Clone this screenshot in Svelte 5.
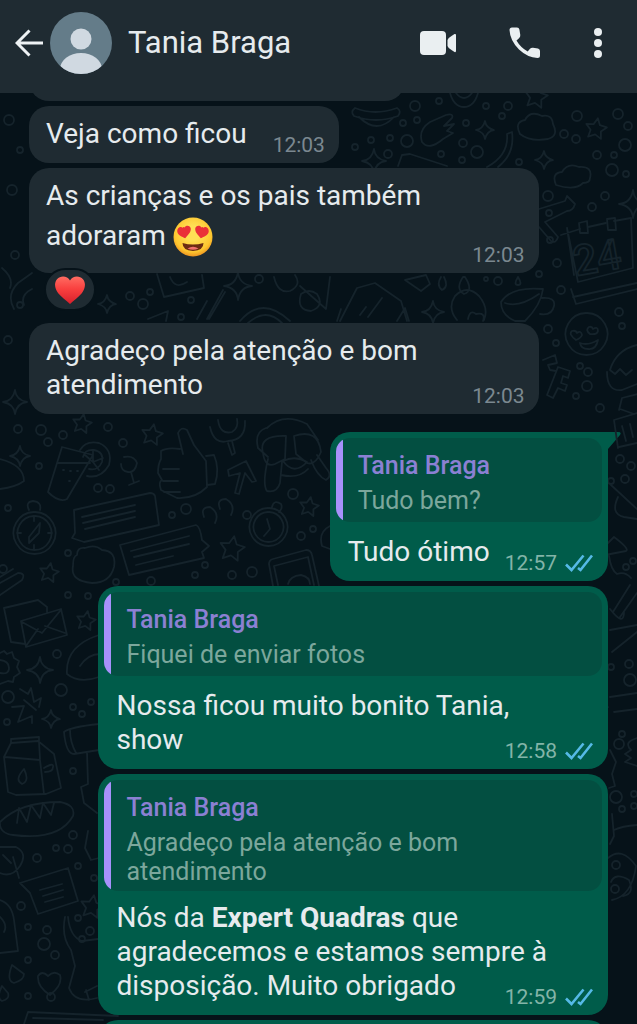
<script>
    const messages = [
        { time: '12:03', lines: [[{ text: 'Veja como ficou' }]] },
        { time: '12:03', wide: true, reaction: true, lines: [[{ text: 'As crianças e os pais também' }], [{ text: 'adoraram ' }, { emoji: true }]] },
        { time: '12:03', wide: true, lines: [[{ text: 'Agradeço pela atenção e bom' }], [{ text: 'atendimento' }]] },
        { time: '12:57', mine: true, tail: true, quote: ['Tudo bem?'], lines: [[{ text: 'Tudo ótimo' }]] },
        {
            time: '12:58',
            mine: true,
            wide: true,
            quote: ['Fiquei de enviar fotos'],
            lines: [[{ text: 'Nossa ficou muito bonito Tania,' }], [{ text: 'show' }]]
        },
        {
            time: '12:59',
            mine: true,
            wide: true,
            quote: ['Agradeço pela atenção e bom', 'atendimento'],
            lines: [
                [{ text: 'Nós da ' }, { text: 'Expert Quadras', bold: true }, { text: ' que' }],
                [{ text: 'agradecemos e estamos sempre à' }],
                [{ text: 'disposição. Muito obrigado' }]
            ]
        }
    ];

    // wallpaper: [x, y, radius]
    const dots = [
        [415, 106, 5], [439, 101, 3], [486, 106, 3], [508, 106, 4], [502, 116, 3], [577, 116, 5], [564, 134, 4], [576, 139, 4],
        [618, 114, 5], [628, 126, 4], [625, 145, 6], [597, 155, 4], [614, 155, 3], [612, 170, 6], [626, 174, 3], [371, 140, 3],
        [390, 138, 3], [407, 141, 6], [355, 147, 3], [388, 154, 4], [441, 154, 3], [463, 143, 4], [477, 152, 6], [462, 160, 3],
        [519, 162, 3], [403, 123, 3], [417, 120, 3], [466, 123, 3], [548, 196, 5], [605, 196, 4], [592, 207, 4], [549, 213, 3],
        [557, 263, 4], [539, 274, 3], [561, 290, 4], [498, 281, 4], [486, 279, 2], [548, 329, 4], [556, 343, 3], [619, 312, 4],
        [622, 326, 3], [580, 366, 3], [588, 372, 4], [587, 386, 5], [576, 396, 3], [600, 408, 4], [130, 296, 4], [150, 292, 3],
        [143, 304, 5], [191, 300, 3], [259, 279, 4], [181, 317, 3], [18, 429, 4], [41, 430, 5], [63, 435, 4], [48, 442, 4],
        [108, 427, 4], [123, 443, 4], [39, 466, 3], [98, 488, 4], [110, 489, 4], [8, 508, 3], [172, 515, 3], [186, 509, 5],
        [293, 494, 5], [313, 529, 3], [301, 536, 4], [247, 515, 4], [68, 553, 3], [205, 565, 3], [232, 575, 4], [252, 572, 5],
        [195, 575, 3], [151, 581, 4], [116, 582, 3], [68, 595, 3], [88, 596, 3], [3, 569, 4], [57, 654, 4], [61, 690, 6],
        [8, 697, 6], [73, 707, 3], [82, 714, 3], [91, 702, 3], [7, 722, 3], [73, 771, 3], [73, 835, 4], [56, 848, 3],
        [68, 849, 4], [37, 858, 4], [78, 866, 3], [94, 878, 3], [21, 906, 4], [28, 927, 3], [47, 930, 4], [44, 944, 6],
        [55, 955, 4], [28, 960, 3], [78, 918, 3], [90, 931, 4], [82, 939, 3], [28, 996, 3], [51, 997, 4], [620, 459, 4],
        [631, 466, 4], [625, 479, 4], [611, 481, 3], [633, 561, 3], [626, 567, 3], [629, 664, 4], [630, 680, 6], [611, 667, 3],
        [622, 734, 3], [619, 744, 5], [616, 797, 6], [634, 794, 3], [634, 806, 3], [622, 809, 3], [616, 865, 4], [615, 889, 4],
        [20, 305, 3], [8, 340, 4], [15, 255, 4], [12, 190, 5], [20, 150, 3], [9, 120, 5], [550, 240, 3]
    ];

    // [x, y, size]
    const stars = [
        [82, 424, 10], [152, 435, 11], [309, 507, 10], [232, 549, 13], [49, 573, 10], [86, 621, 10], [596, 129, 11], [536, 97, 12], [92, 907, 12]
    ];

    const sparkles = [
        [485, 130, 9], [544, 160, 9], [238, 286, 14], [107, 304, 9], [433, 312, 11], [633, 204, 14], [40, 670, 13],
        [51, 719, 9], [374, 161, 12], [20, 456, 10], [15, 402, 12]
    ];

    const doodles = [
        // planet, pizza, hand, banana, clouds
        'M355 108q20 8 42 0q5 3 1 8q-22 8-44 0q-4-4 1-8ZM359 117q18 18 35 0M450 93q4 14 14 14t14-14M456 93q8 10 16 0',
        'M422 142q-4-12 8-20l16-7q8-2 6 3l-8 8l10-2l-7 7l6 2l-10 6q-14 12-21 3ZM487 167q22-12 20-33l5-2q3 22-14 35',
        'M398 166l4-11l8-1l37 12M520 134q-6-12 5-14q5-10 17-4q10-2 11 8q6 12-5 15q-18 3-28-5ZM556 185q-5-12 6-13q6-10 17-5q14-1 11 11q0 5-7 5q-8 8-27 2Z',
        // paint brush and calendar
        'M539 209l26-8l2-5l8 8q-2 7-8 7l-22 11l13 15q-2 7-7 4l-12-14M561 235l19-6m8-2l18-4m8-2l17-3l2 50l-55 14l-11-54l7 47M571 289l5 15l61-15M573 297l64-14',
        'M579 223l8-2l1 12h-8ZM607 219l8-1l1 12h-8Z',
        // cup, card, drop, balloon, camera, glasses
        'M501 302q10-16 42-13q-2 16-18 32h-10q-14-6-14-19Zm4 1q14 5 34-9M542 298q14-1 12 8q-2 10-14 8M340 321l17-33l18-5l26 18l6 20M341 309l-4 12M360 315l6-8m2 10l14-19M397 321l8-13l4 13',
        'M405 280l21-5l4 9l-9 7ZM463 277q-8 12 1 17q10-3 1-17ZM441 277q-5 8 1 13q7-3 2-13M518 277q-5 8 0 8q5 0 0-8M157 274l7 23l40-9l-2-13M170 277q5 13 17 5M197 319l10-18m0 18l16-29m-14 29l16-27',
        'M274 277q4 17 16 14q12-6 5-16M300 286l26 23l4-32M301 294q-5 16 10 17q14-5 6-17q-8-6-16 0ZM240 321q22-26 50 0M248 323q18-16 34 0M148 319l20-8l-2 10M14 309q-8-14 4-26l14-10M24 305q-4-10 8-16M2 268q12 10 8 20',
        // medal, emoji, letters, donut
        'M457 320q-10-12-2-24q12-12 24 0q10 12 5 24M468 319q2-10 8-5q10-2 7 7M587 313a21 21 0 1 1-1 0M576 340q-8-6-4-9q4-1 5 2q4-3 5 2q-1 3-6 5ZM590 334q-5-4-1-7q3-1 4 2q5-3 5 2q-1 4-8 3ZM580 343q8 3 18-3q-2 10-10 9q-7 0-8-6Z',
        'M543 360l12-5l2 8l-9 2l2 5l6 1M558 367l12 4l-2 7l-5-2l-2 7l6 2l-2 6l-7-3l-5 10l-6-3ZM610 370q6-20 27-25M607 372q0 20 15 18l15-6M610 370l5 4l5-5l6 6l6-5M619 410l3-12l16-4M620 409l14 5',
        // lemonade
        'M62 447l31 8l-26 44q-8 4-19-7ZM57 463h33M80 450q6-10 19-7q14 6 10 22q-8 14-22 11M83 457q2-8 11-7q10 2 8 12q-4 9-13 7M93 462l-8-7m8 7v-12m0 12l10-4m-10 4l6 8M63 470h1m6 1h1m6 0h1m-9 10h1',
        // pin, thumb up, microphone
        'M124 457q10-2 13 6q-2 10-9 9q-7-1-7-8M131 472l3 11m-5 2l10-4M183 454l-5-21q3-7 9-3l7 15l12 16l1 26q-12 12-30 11l-16-8q-3-8 1-10l-4-7q0-9 3-14l0-8q6-4 19-2M163 469h16m-16 12h15m-14 11h16M206 456l8-1q6 14 1 29l-8 1M210 427q4 18 18 14q18-1 17-20M218 420q2 15 14 12q7-4 5-13M228 443l4 12l3-2l-3-12',
        // arrow, covered eyes
        'M228 470l18-9l10 20l-4 1l-7-9l-6 21l-4-1l5-20l-11 3ZM267 428q16-16 40-4l11 16M266 428q-12 4-8 20l10 9M286 436q-28-1-23 17q2 15 12 11l10-5ZM294 436q24-8 27 16q-6 14-14 11l-11-9ZM268 459q-6 25-1 32q10 2 13-8l2-21M311 460q6 16 15 20q7-4 0-12l-9-13M283 461q12-6 24 1q-13 14-24-1ZM281 475q18 4 27-6',
        // notes, compass, quotes, clock
        'M74 510l76-17q4 0 5 3l4 29l-75 17l-12-4l3-5ZM82 517l53-12m-52 18l52-12m-50 18l50-12M120 545l76-20q4 1 6 15l7 6l-7 6l2 6l-75 17ZM131 551l58-15m-55 21l55-13m-53 21l37-9',
        'M34 512a21 21 0 1 0 1 0M34 516a17 17 0 1 0 1 0M40 523l-11 14v6l10-10ZM29 510q-4-8 4-9q9 1 7 9M34 517v4m0 24v4m-17-16h4m27 0h4M204 517q-4-10 6-10q10 6 5 16M220 509q-4-10 6-10q10 6 5 16M268 508a19 19 0 1 0 1 0M268 512a15 15 0 1 0 1 0M267 519l3 10l-6 7M272 507q2-8 9-3q2 4-2 8',
        // chick, phone, clip, mug
        'M77 555q0-8 8-7q10-4 17 2q15 1 12 17q-4 16-22 16q-22-2-19-17q0-10 4-11ZM273 586l-4-22q0-4 4-5l33-9q5 0 6 5l7 31M278 585l-4-19l34-9l6 28M288 584q2-8 13-9q9 2 9 9M0 583l18-10q8 0 4 7l-22 15M0 577l13-8M0 489q16-2 24-8q0-16-24-22M330 526q-12 6-8 20l8 3',
        // envelopes, gear, helmet, sparkle letters
        'M4 608l34-8l9 7v5M4 608l7 34l14 2M21 621l40-12l6 26l-41 12ZM22 622l20 11l18-22m-34 35l12-17m7-3l20 7M0 653l4-2l3 3l5-2l2 6l5 3l-2 6l3 6l-6 4l-1 5l-5-1l-8 3M0 660q9 1 9 8t-9 5M67 674q-2-28 32-39M67 674q12 10 32 3M80 666q8-12 20-12M20 689l8 5l3-6l3 14l7-4l-2 9M12 707l12-1l-6 16l14-6v7M24 700l12 10',
        // milk, cap, bread
        'M4 757l7-14l27-2l16 13l7 34l-15 6l-30 1l-8-3ZM5 757l35 3l4 34M11 743v-4l28-2v4m0 1l1 17M24 769q-10 11-2 15q8-3 2-15ZM44 768q10-6 9-1q0 5-8 5M64 732q6-5 35-8M64 732q2 22 10 22l25-4M70 730q0 12 6 23M87 752l1 32l-7 3l3 16l13 10M0 822q20-20 60-20q16 3 13 14q-14 25-60 19q-14-2-13-13ZM17 823l2-15l8 14l4-17l9 13l3-15l8 12l3-12',
        // cutlery, card, shirt, drops, heart, bottle
        'M0 847h16q12 6 4 19q-8 12-20 7M3 855l8 8m2-6l6 21M20 883l48-15l10 33l-40 13l-8-21ZM40 890l22-6m-19 12l20-6m-18 12l18-5M88 831l-3 17l6 12l8-2M0 900q12 4 14 20l4 31l-18 2M0 917q8 8 4 15M12 965q-6 16 2 18q10-3 10-9ZM2 986q-6 12 0 15q8-2 6-8ZM38 976q4-6 10 0q6-6 12-1q3 10-10 20q-13-8-12-19ZM65 917q-4 20 6 33l4 16l-6 22q6 16 28 10M68 917q2 20 14 24l16-2M85 992l12-6m-11 4l3 10M24 1024l4-12l90 4M33 1018l70 2',
        // right edge
        'M618 448l-4-28l23-7M619 447l18-4M622 426l4 15m4-17l3 13M611 485l26 24M618 497q-8 17 6 20l13 2M598 553l16-16q16 12 12 14l-26 5ZM609 556q2 14 8 18q8-3 14 4M613 612l17-27M620 617l17-24M610 609q14 18 14 3M610 630l27-5M612 652l25-20M610 697l27-4M614 712l23-3M608 707l-5 6l-3-8Z',
        'M610 750l6 12l-4 12l3 12l-6 2M637 738q-14 4-6 12l-6 4l6 4l-6 4l12 4M612 814l2 22l-4 8M614 830q8-4 23-5M608 858q14-12 28 8q-4 30-24 34M611 882q4-10 18-2q6 14-6 16'
    ];

    function starPoints([x, y, r]) {
        const points = [];
        for (let i = 0; i < 10; i++) {
            const a = (i * Math.PI) / 5 - 1.4;
            const d = i % 2 ? r * 0.5 : r;
            points.push((x + d * Math.cos(a)).toFixed(1) + ',' + (y + d * Math.sin(a)).toFixed(1));
        }
        return points.join(' ');
    }

    function sparklePath([x, y, s]) {
        return `M${x} ${y - s}Q${x + 1} ${y - 2} ${x + s} ${y}Q${x + 2} ${y + 1} ${x} ${y + s}Q${x - 1} ${y + 2} ${x - s} ${y}Q${x - 2} ${y - 1} ${x} ${y - s}Z`;
    }
</script>

{#snippet heart()}
    <svg class="heart" viewBox="0 0 30 28" role="img" aria-label="❤️">
        <defs>
            <linearGradient id="heart-fill" x1="0" y1="0" x2="0" y2="1">
                <stop offset="0" stop-color="#ff6c62" />
                <stop offset="0.45" stop-color="#f9403f" />
                <stop offset="1" stop-color="#d8202c" />
            </linearGradient>
        </defs>
        <path fill="url(#heart-fill)" d="M15 4.6C12.5-.3 5.5-.7 2 3.2C-1.5 7.5.2 13.5 3.2 17.2C6.5 21.2 11 24.2 15 28C19 24.2 23.5 21.2 26.8 17.2C29.8 13.5 31.5 7.5 28 3.2C24.5-.7 17.5-.3 15 4.6Z" />
    </svg>
{/snippet}

{#snippet heartEyes()}
    <svg class="emoji" viewBox="0 0 40 40" role="img" aria-label="😍">
        <defs>
            <radialGradient id="face-fill" cx="0.5" cy="0.4" r="0.6">
                <stop offset="0.3" stop-color="#ffdf55" />
                <stop offset="0.8" stop-color="#fdc62f" />
                <stop offset="1" stop-color="#ee9420" />
            </radialGradient>
        </defs>
        <circle cx="20" cy="20" r="19.5" fill="url(#face-fill)" />
        <path fill="#ea3038" d="M11.5 10.5C13 7.500 17.500 8.300 17.800 11.800C18 15.500 14.500 18.500 12.200 21.300C9 19.800 4.800 18.300 4.300 14.800C3.800 11.300 7.500 8.800 9.700 10.800Q10.500 9.500 11.500 10.500Z" />
        <path fill="#ea3038" d="M28.500 10.500C27 7.500 22.500 8.300 22.200 11.800C22 15.500 25.500 18.500 27.800 21.300C31 19.800 35.200 18.300 35.700 14.800C36.200 11.300 32.500 8.800 30.300 10.800Q29.500 9.500 28.500 10.500Z" />
        <path fill="#6b2c12" d="M9.500 26Q20 29 30.500 26Q30.500 33.500 20 34Q9.500 33.500 9.500 26Z" />
        <path fill="#f0716d" d="M14.500 31.500Q20 28 25.500 31.500Q20 34 14.500 31.500Z" />
    </svg>
{/snippet}

{#snippet ticks()}
    <svg class="ticks" viewBox="0 0 28 18" role="img" aria-label="Lida">
        <path d="M1 10.500L6.500 16L18.500 1.500M13 14L15.500 16L27 1.500" />
    </svg>
{/snippet}

<div class="chat">
    <svg class="wallpaper" viewBox="0 0 637 1024" preserveAspectRatio="xMinYMin slice" aria-hidden="true">
        {#each dots as [x, y, r]}
            <circle cx={x} cy={y} {r} />
        {/each}
        {#each stars as star}
            <polygon points={starPoints(star)} />
        {/each}
        {#each sparkles as sparkle}
            <path d={sparklePath(sparkle)} />
        {/each}
        {#each doodles as d}
            <path {d} />
        {/each}
        <text x="576" y="276" transform="rotate(-10 576 276)">24</text>
    </svg>

    <header>
        <button class="back" aria-label="Voltar">
            <svg viewBox="0 0 28 28"><path d="M28 14H2M14.500 1.500L2 14L14.500 26.500" /></svg>
        </button>
        <svg class="avatar" viewBox="0 0 62 62" aria-hidden="true">
            <clipPath id="avatar-clip"><circle cx="31" cy="31" r="31" /></clipPath>
            <g clip-path="url(#avatar-clip)">
                <rect width="62" height="62" fill="#647c89" />
                <circle cx="31" cy="27" r="10.500" fill="#d0d9e1" />
                <ellipse cx="31" cy="57" rx="21" ry="16" fill="#d0d9e1" />
            </g>
        </svg>
        <h1>Tania Braga</h1>
        <nav>
            <button aria-label="Chamada de vídeo">
                <svg class="video" viewBox="0 0 36 24"><rect width="26" height="24" rx="4" /><path d="M27.500 9Q28 7 31.500 5L34.500 3Q36 2.500 36 4V20Q36 21.500 34.500 21L31.500 19Q28 17 27.500 15Z" /></svg>
            </button>
            <button aria-label="Ligar">
                <svg class="phone" viewBox="0 0 32 32"><path d="M3 .5H8Q10 .5 10.400 2.500L11.300 8Q11.500 10 10 11.200L7.500 13.500Q11.500 20.500 18.700 24.500L21 21.800Q22 20.500 24 20.700L29 21.500Q31 22 31 24V28.500Q31 31 28.500 31Q18.500 30.500 10 22.500Q1 13.500 .5 3Q.5.5 3 .5Z" /></svg>
            </button>
            <button aria-label="Mais opções">
                <svg class="menu" viewBox="0 0 8 30"><circle cx="4" cy="4" r="4" /><circle cx="4" cy="15" r="4" /><circle cx="4" cy="26" r="4" /></svg>
            </button>
        </nav>
    </header>

    <main>
        <div class="bubble previous"></div>
        {#each messages as message}
            <article class="bubble" class:mine={message.mine} class:wide={message.wide} class:tail={message.tail}>
                {#if message.quote}
                    <blockquote class:long={message.quote.length > 1}>
                        <strong>Tania Braga</strong>
                        {#each message.quote as line}
                            <p>{line}</p>
                        {/each}
                    </blockquote>
                {/if}
                <div class="body">
                    {#each message.lines as line, i}
                        <div class="line">
                            <p>{#each line as part}{#if part.emoji}{@render heartEyes()}{:else if part.bold}<b>{part.text}</b>{:else}{part.text}{/if}{/each}</p>
                            {#if i === message.lines.length - 1}
                                <div class="meta">
                                    <time>{message.time}</time>
                                    {#if message.mine}{@render ticks()}{/if}
                                </div>
                            {/if}
                        </div>
                    {/each}
                </div>
                {#if message.tail}
                    <svg class="corner" viewBox="0 0 34 20" aria-hidden="true"><path d="M0 0H31Q35 0 33 3L21 17V20H0Z" /></svg>
                {/if}
                {#if message.reaction}
                    <button class="reaction" aria-label="Reação">{@render heart()}</button>
                {/if}
            </article>
        {/each}
        <div class="bubble mine wide next"></div>
    </main>
</div>

<style>
:global(body) {
    margin: 0;
    background: #061219;
}
.chat {
    position: relative;
    height: 100vh;
    overflow: hidden;
    font-family: Roboto, "Liberation Sans", sans-serif;
    color: #e6ebee;
}
.wallpaper {
    position: absolute;
    inset: 0;
    width: 100%;
    height: 100%;
    fill: none;
    stroke: #15232b;
    stroke-width: 1.8;
    stroke-linecap: round;
    stroke-linejoin: round;
}
.wallpaper text {
    font-size: 42px;
    font-weight: 500;
}

button {
    padding: 0;
    border: 0;
    background: none;
    color: inherit;
    cursor: pointer;
}
svg {
    display: block;
}

header {
    position: relative;
    z-index: 1;
    display: flex;
    align-items: center;
    height: 86px;
    padding: 0 35px 7px 15px;
    background: #1f2b32;
}
.back svg {
    width: 28px;
    height: 28px;
    fill: none;
    stroke: #eef2f4;
    stroke-width: 3;
}
.avatar {
    width: 62px;
    height: 62px;
    margin: 0 16px 0 7px;
}
h1 {
    flex: 1;
    margin: 0;
    font-size: 31px;
    font-weight: 400;
    line-height: 38px;
}
nav {
    display: flex;
    align-items: center;
    gap: 53px;
}
nav svg {
    fill: #eaeff1;
}
.video {
    width: 36px;
    height: 24px;
}
.phone {
    width: 32px;
    height: 32px;
}
.menu {
    width: 8px;
    height: 30px;
}

main {
    position: relative;
    display: flex;
    flex-direction: column;
    align-items: flex-start;
    gap: 5px;
    padding: 0 29px;
}
.bubble {
    position: relative;
    box-sizing: border-box;
    max-width: 88%;
    border-radius: 20px;
    background: #1f2b32;
}
.wide {
    width: 88%;
}
.previous {
    width: 65%;
    height: 58px;
    margin-top: -50px;
}
.mine {
    align-self: flex-end;
    padding: 6px;
    background: #005c4a;
}
.next {
    height: 58px;
}
.tail {
    margin-top: 13px;
    border-top-right-radius: 0;
}
.corner {
    position: absolute;
    z-index: -1;
    top: 0;
    right: -13px;
    width: 34px;
    height: 20px;
    fill: #005c4a;
}

.body {
    padding: 11px 14px 12px 17px;
}
.mine .body {
    padding: 13px 9px 6px 12px;
}
.line {
    display: flex;
    align-items: flex-end;
    justify-content: space-between;
    gap: 26px;
}
.mine .line {
    gap: 15px;
}
p {
    margin: 0;
}
.body p {
    font-size: 28px;
    line-height: 34px;
}
.emoji {
    display: inline-block;
    width: 40px;
    height: 40px;
    margin: 4px 0;
    vertical-align: -16px;
}
.meta {
    display: flex;
    align-items: center;
    gap: 8px;
    margin-bottom: -6px;
    font-size: 21px;
    line-height: 24px;
    color: #7b8890;
}
.mine .meta {
    color: #83b4a8;
}
.ticks {
    width: 28px;
    height: 18px;
    fill: none;
    stroke: #55b9e6;
    stroke-width: 2.6;
}

blockquote {
    margin: 0;
    padding: 11px 16px 7px 22px;
    border-radius: 14px;
    background: linear-gradient(90deg, #a791fb 7px, #034f41 7px);
    font-size: 25px;
    line-height: 29px;
    color: #7ca79c;
}
blockquote strong {
    display: block;
    margin-bottom: 3px;
    font-weight: 500;
    line-height: 34px;
    color: #8b80d3;
}
blockquote.long {
    padding-bottom: 5px;
}
.mine .long + .body {
    padding-top: 10px;
}

.reaction {
    position: absolute;
    top: calc(100% - 5px);
    left: 15px;
    display: grid;
    place-items: center;
    width: 52px;
    height: 43px;
    border: 2px solid #061219;
    border-radius: 22px;
    background: #1f2b32;
}
.heart {
    width: 30px;
    height: 28px;
}
.bubble:has(.reaction) {
    margin-bottom: 45px;
}
</style>
